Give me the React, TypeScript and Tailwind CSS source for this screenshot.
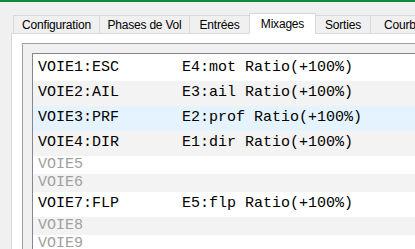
const tabs = [
  { label: "Configuration", w: "w-[87px]" },
  { label: "Phases de Vol", w: "w-[91px]" },
  { label: "Entrées", w: "w-[61px]" },
  { label: "Mixages", w: "w-[67px]", active: true },
  { label: "Sorties", w: "w-[56px]" },
  { label: "Courbes", w: "w-[72px]" },
];

const voies = [
  { name: "VOIE1:ESC", mix: "E4:mot Ratio(+100%)" },
  { name: "VOIE2:AIL", mix: "E3:ail Ratio(+100%)" },
  { name: "VOIE3:PRF", mix: "E2:prof Ratio(+100%)", selected: true },
  { name: "VOIE4:DIR", mix: "E1:dir Ratio(+100%)" },
  { name: "VOIE5" },
  { name: "VOIE6" },
  { name: "VOIE7:FLP", mix: "E5:flp Ratio(+100%)" },
  { name: "VOIE8" },
  { name: "VOIE9" },
];

export default function App() {
  return (
    <div className="h-[249px] w-[415px] overflow-hidden bg-[#f0f0f0]">
      <div className="h-[2px] w-full bg-[#17893d]" />

      {/* onglets */}
      <div
        className="mt-[11px] flex items-end pl-[13px] text-[12px] tracking-[-0.2px] text-black"
        style={{ fontFamily: '"Liberation Sans", Arial, sans-serif' }}
      >
        {tabs.map((t, i) =>
          t.active ? (
            <div
              key={t.label}
              className={`relative z-10 -mb-px -ml-px flex h-[21px] shrink-0 items-start justify-center border-x border-t border-[#d9d9d9] bg-white pt-[3px] leading-[14px] ${t.w}`}
            >
              {t.label}
            </div>
          ) : (
            <div
              key={t.label}
              className={`flex h-[18px] shrink-0 items-center justify-center border-x border-t border-[#d9d9d9] bg-[#f0f0f0] leading-[14px] ${t.w} ${i > 0 ? "-ml-px" : ""}`}
            >
              {t.label}
            </div>
          )
        )}
      </div>

      {/* page de l'onglet */}
      <div className="ml-[11px] w-[500px] border-l border-t border-[#d9d9d9] bg-white pl-[10px] pt-[9px]">
        <div className="w-[480px] border-l border-t border-[#a0a0a0] bg-[#f0f0f0] pl-[9px] pt-[9px]">
          <div
            className="w-[460px] border-l border-t border-[#828790] bg-white pt-[2px] text-[15px]"
            style={{ fontFamily: '"Liberation Mono", "Courier New", monospace' }}
          >
            {voies.map((v, i) => (
              <div
                key={v.name}
                className={`flex items-center whitespace-pre pl-[5px] ${v.mix ? "h-[25px] text-black" : "h-[18px] pt-[1px] text-[#a0a0a0]"} ${
                  v.selected ? "bg-[#e5f3ff]" : i % 2 === 1 ? "bg-[#f3f3f3]" : "bg-white"
                }`}
              >
                {v.mix ? v.name.padEnd(16, " ") + v.mix : v.name}
              </div>
            ))}
          </div>
        </div>
      </div>
    </div>
  );
}
